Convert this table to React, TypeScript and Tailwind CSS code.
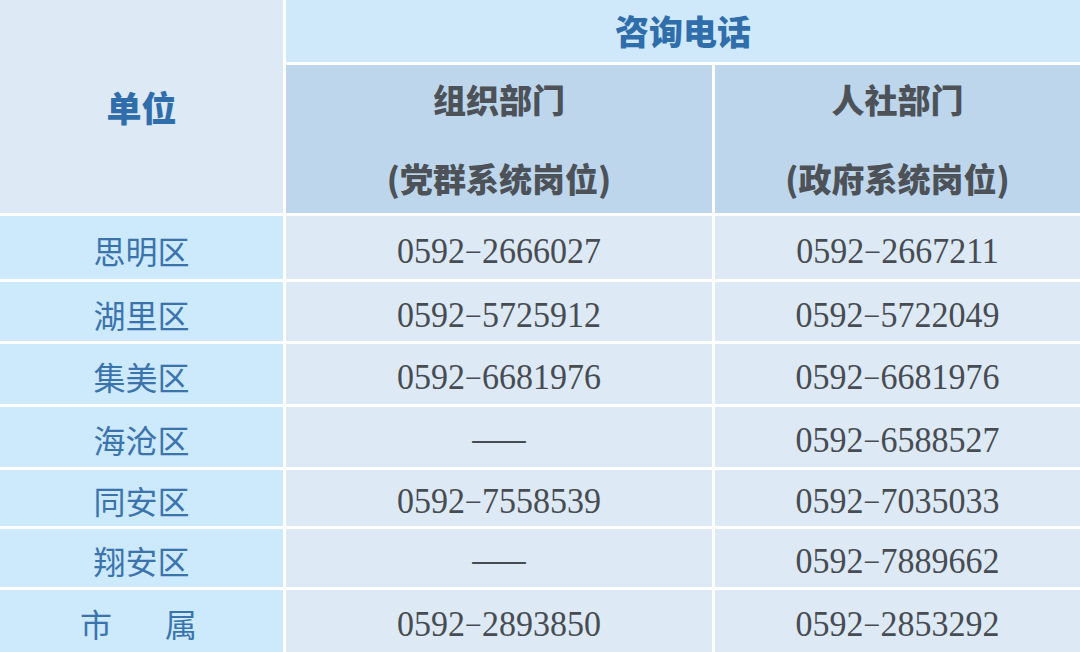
import React from "react";

const cjk = { fontFamily: '"Noto Sans CJK SC", "Noto Sans", sans-serif' };
const serif = { fontFamily: '"Liberation Serif", "Noto Sans CJK SC", serif' };

type Row = { name: string; a: string | null; b: string; h: string };

const rows: Row[] = [
  { name: "思明区", a: "0592-2666027", b: "0592-2667211", h: "h-[63px]" },
  { name: "湖里区", a: "0592-5725912", b: "0592-5722049", h: "h-[59px]" },
  { name: "集美区", a: "0592-6681976", b: "0592-6681976", h: "h-[60px]" },
  { name: "海沧区", a: null, b: "0592-6588527", h: "h-[60px]" },
  { name: "同安区", a: "0592-7558539", b: "0592-7035033", h: "h-[56px]" },
  { name: "翔安区", a: null, b: "0592-7889662", h: "h-[58px]" },
  { name: "市属", a: "0592-2893850", b: "0592-2853292", h: "h-[62px]" },
];

function Phone({ v }: { v: string | null }) {
  if (!v) {
    return (
      <span className="text-[34px] leading-none text-[#474c53] pt-[2px]" style={cjk}>
        ——
      </span>
    );
  }
  const [p1, p2] = v.split("-");
  return (
    <span className="flex items-baseline text-[34px] leading-none text-[#474c53] pt-[6px] scale-y-[1.06]" style={serif}>
      <span>{p1}</span>
      <span className="text-[30px] w-[17px] text-center">−</span>
      <span>{p2}</span>
    </span>
  );
}

export default function App() {
  return (
    <div className="w-[1080px] h-[652px] bg-white overflow-hidden">
      <div className="grid grid-cols-[283px_426px_1fr] gap-[3px]">
        <div className="row-span-2 bg-[#dde9f5] flex items-center justify-center">
          <span className="text-[35px] font-black text-[#2f6eab] leading-none" style={cjk}>
            单位
          </span>
        </div>
        <div className="col-span-2 h-[62px] bg-[#cfe9fb] flex items-center justify-center">
          <span className="text-[34px] font-black text-[#2f6eab] leading-none" style={cjk}>
            咨询电话
          </span>
        </div>
        <div className="h-[148px] bg-[#bdd6ec] flex flex-col items-center justify-center gap-[46px]">
          <span className="text-[33px] font-black text-[#4d5258] leading-none" style={cjk}>
            组织部门
          </span>
          <span className="text-[33px] font-black text-[#4d5258] leading-none" style={cjk}>
            (党群系统岗位)
          </span>
        </div>
        <div className="h-[148px] bg-[#bdd6ec] flex flex-col items-center justify-center gap-[46px]">
          <span className="text-[33px] font-black text-[#4d5258] leading-none" style={cjk}>
            人社部门
          </span>
          <span className="text-[33px] font-black text-[#4d5258] leading-none" style={cjk}>
            (政府系统岗位)
          </span>
        </div>

        {rows.map((r) => (
          <React.Fragment key={r.name}>
            <div className={`${r.h} bg-[#cde9fc] flex items-center justify-center pt-[4px]`}>
              {r.name === "市属" ? (
                <span className="flex gap-[53px] text-[32px] leading-none text-[#3b74ad] -translate-x-[3px]" style={cjk}>
                  <span>市</span>
                  <span>属</span>
                </span>
              ) : (
                <span className="text-[32px] leading-none text-[#3b74ad]" style={cjk}>
                  {r.name}
                </span>
              )}
            </div>
            <div className={`${r.h} bg-[#dde9f5] flex items-center justify-center`}>
              <Phone v={r.a} />
            </div>
            <div className={`${r.h} bg-[#dde9f5] flex items-center justify-center`}>
              <Phone v={r.b} />
            </div>
          </React.Fragment>
        ))}
      </div>
    </div>
  );
}
